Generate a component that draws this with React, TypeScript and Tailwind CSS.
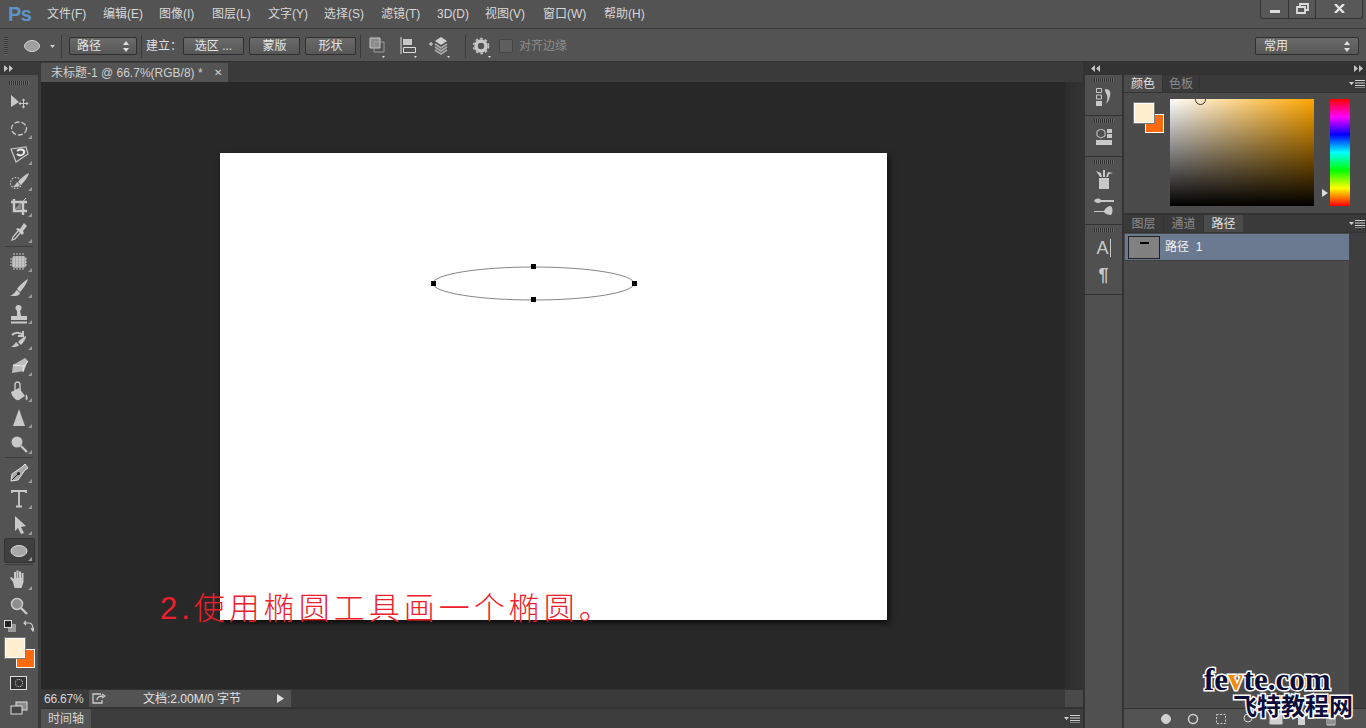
import React from "react";

const c = "#c9c9c9";

// little flyout corner on the tool buttons
const Corner = () => <path d="M32 19v4h-4z" fill="#9a9a9a" />;

const toolIcons: Record<string, React.ReactNode> = {
  move: (
    <>
      <path d="M11 5l8 7-8 5z" fill={c} />
      <path d="M23.500 10v7M20 13.500h7" stroke={c} strokeWidth="1" />
      <path d="M23.500 8.500l-2 2h4zM23.500 18.500l-2-2h4zM18.500 13.500l2-2v4zM28.500 13.500l-2-2v4z" fill={c} />
    </>
  ),
  marquee: (
    <>
      <ellipse cx="19" cy="12.500" rx="7.500" ry="6.500" fill="none" stroke={c} strokeWidth="1.300" strokeDasharray="5 2" />
      <Corner />
    </>
  ),
  lasso: (
    <>
      <path d="M11 7l15-2 2 7-12 8z" fill="none" stroke={c} strokeWidth="1.200" />
      <path d="M17 9c4-3 8-1 7 2s-5 3-7 1" fill="none" stroke="#eee" strokeWidth="2" />
      <Corner />
    </>
  ),
  quick: (
    <>
      <circle cx="16" cy="15" r="5.500" fill="none" stroke={c} strokeWidth="1.200" strokeDasharray="1.500 1.500" />
      <path d="M29 5c-3 1-8 5-11 9l3 3c3-3 7-8 8-12zM13 19c3 0 6 0 7-2l-3-3c-1 2-2 3-4 5z" fill={c} />
      <Corner />
    </>
  ),
  crop: (
    <>
      <path d="M11 8h16M14 5v3M14 8v9h13M23 8v13" stroke={c} strokeWidth="2.400" fill="none" />
      <path d="M26 4L13 18" stroke={c} strokeWidth="1" />
      <path d="M16 15l5-5v5z" fill="#888" />
      <Corner />
    </>
  ),
  dropper: (
    <>
      <path d="M24 3l3 3-4 5 1 2-2 2-6-6 2-1 2 1z" fill={c} />
      <path d="M18 11L13 17l-1 3 3-1 5-6" fill="none" stroke={c} strokeWidth="1.300" />
      <Corner />
    </>
  ),
  heal: (
    <>
      <rect x="12" y="7" width="14" height="12" rx="3" fill="#a8a8a8" />
      <path d="M14 4v18M17 4v18M20 4v18M23 4v18M10 10h18M10 13h18M10 16h18" stroke="#e0e0e0" strokeWidth="1" strokeDasharray="2 1" opacity=".8" />
      <Corner />
    </>
  ),
  brush: (
    <>
      <path d="M28 4C24 6 19 11 17 14l3 3c3-3 7-9 8-13z" fill={c} />
      <path d="M10 21c3 0 9 1 10-3l-3-3c-2 1-2 4-7 6z" fill={c} />
      <Corner />
    </>
  ),
  stamp: (
    <>
      <circle cx="18.500" cy="7" r="3" fill={c} />
      <path d="M17 9h3l1 6h6v4H11v-4h6zM11 20.500h16v2H11z" fill={c} />
      <Corner />
    </>
  ),
  history: (
    <>
      <path d="M12 8c3-3 8-3 11 0M23 4v5h-5" fill="none" stroke={c} strokeWidth="2" />
      <path d="M26 9c-3 1-6 4-8 6l3 3c2-2 5-6 5-9zM11 20c3 0 7 0 8-2l-3-3c-1 2-2 3-5 5z" fill={c} />
      <Corner />
    </>
  ),
  eraser: (
    <>
      <path d="M13 12l12-7 3 3-4 10-12 2z" fill="#bdbdbd" />
      <path d="M13 12l11 1 4-5M24 13l-1 6" fill="none" stroke="#ececec" strokeWidth="1" />
      <Corner />
    </>
  ),
  bucket: (
    <>
      <path d="M11 13l8-4 6 8-6 4c-3 1-7-3-8-8z" fill={c} />
      <path d="M15 12V6c0-4 5-4 5 0v6" fill="none" stroke={c} strokeWidth="1.400" />
      <path d="M26 15c2 2 2 5 1 6s-2-1-1-6z" fill={c} />
      <Corner />
    </>
  ),
  sharpen: (
    <>
      <path d="M19 4l6 17H13z" fill={c} />
      <Corner />
    </>
  ),
  dodge: (
    <>
      <circle cx="17" cy="11" r="5.500" fill={c} />
      <path d="M21 15l6 6" stroke={c} strokeWidth="2.200" />
      <Corner />
    </>
  ),
  pen: (
    <>
      <path d="M25 4l3 4-3 2-7 10-7 1 1-7 10-7z" fill="#a8a8a8" stroke="#e5e5e5" strokeWidth="1" />
      <path d="M12 20l6-6" stroke="#222" strokeWidth="1" />
      <circle cx="18.500" cy="13.500" r="1.500" fill="#222" />
      <Corner />
    </>
  ),
  text: (
    <>
      <path d="M12 7V5h14v2M19 5v15M16 20.500h6" fill="none" stroke={c} strokeWidth="1.800" />
      <Corner />
    </>
  ),
  path: (
    <>
      <path d="M15 4l11 10-5 1 3 6-3 1-3-6-3 3z" fill={c} />
      <Corner />
    </>
  ),
  ellipse: (
    <>
      <ellipse cx="19" cy="13" rx="8" ry="5.500" fill="#a8a8a8" stroke="#d8d8d8" strokeWidth="1" />
      <Corner />
    </>
  ),
  hand: (
    <>
      <path d="M13 15l-3-4 1-1 3 2V5h2v6h.500V3.500h2V11h.500V4.500h2V11h.500V6h2v9l-2 6h-7z" fill={c} />
      <Corner />
    </>
  ),
  zoom: (
    <>
      <circle cx="17" cy="11" r="5.500" fill="#8e8e8e" stroke={c} strokeWidth="1.500" />
      <path d="M21 15l6 6" stroke={c} strokeWidth="2.400" />
    </>
  ),
};

const toolGroups = [
  ["move", "marquee", "lasso", "quick", "crop", "dropper"],
  ["heal", "brush", "stamp", "history", "eraser", "bucket", "sharpen", "dodge"],
  ["pen", "text", "path", "ellipse"],
  ["hand", "zoom"],
];

const menus = [
  ["文件(F)", "w-[56px]"],
  ["编辑(E)", "w-[56px]"],
  ["图像(I)", "w-[53px]"],
  ["图层(L)", "w-[56px]"],
  ["文字(Y)", "w-[56px]"],
  ["选择(S)", "w-[57px]"],
  ["滤镜(T)", "w-[56px]"],
  ["3D(D)", "w-[48px]"],
  ["视图(V)", "w-[58px]"],
  ["窗口(W)", "w-[61px]"],
  ["帮助(H)", "w-[56px]"],
];

const Grip = () => (
  <div className="h-[4px] w-[20px] bg-[repeating-linear-gradient(to_right,#2e2e2e_0,#2e2e2e_1px,#6a6a6a_1px,#6a6a6a_2px)]" />
);

const Btn = ({ label, w }: { label: string; w: string }) => (
  <div className={`${w} flex h-[18px] items-center justify-center rounded-[2px] border border-[#2f2f2f] bg-[linear-gradient(#6a6a6a,#575757)] text-xs text-[#e4e4e4]`}>
    {label}
  </div>
);

const Sep = () => <div className="mx-[4px] h-[23px] w-px bg-[#3a3a3a]" />;

const Collapse = ({ dir }: { dir: "l" | "r" }) => (
  <svg width="9" height="7" viewBox="0 0 9 7" fill="#c4c4c4">
    {dir === "r" ? <path d="M0 0l4 3.500L0 7zM5 0l4 3.500L5 7z" /> : <path d="M4 0L0 3.500 4 7zM9 0L5 3.500 9 7z" />}
  </svg>
);

const PanelMenu = () => (
  <svg width="16" height="8" viewBox="0 0 16 8" fill="#d0d0d0">
    <path d="M0 2h5L2.500 5zM6 0h10v1H6zM6 2.500h10v1H6zM6 5h10v1H6zM6 7.500h10v1H6z" />
  </svg>
);

const Swatches = () => (
  <div className="relative h-[30px] w-[32px]">
    <div className="absolute left-[11px] top-[11px] h-[19px] w-[19px] border border-white bg-[#ff6a0d]" />
    <div className="absolute left-0 top-0 h-[20px] w-[20px] border border-white bg-[#ffefd0] outline outline-[#7a7a7a]" />
  </div>
);

const DockGroup = ({ h, children }: { h: string; children: React.ReactNode }) => (
  <div className={`${h} flex flex-col items-center gap-[6px] border-b border-[#333] bg-[#505050] pt-[3px]`}>
    <Grip />
    {children}
  </div>
);

export default function App() {
  return (
    <div className="flex h-[728px] w-[1366px] flex-col overflow-hidden bg-[#535353] font-['Liberation_Sans','Noto_Sans_CJK_SC',sans-serif] text-xs text-[#d6d6d6]">
      {/* menu bar */}
      <div className="flex h-[29px] shrink-0 items-center border-b border-[#3a3a3a]">
        <div className="w-[47px] pl-[8px] text-[20px] font-bold leading-none tracking-[-0.5px] text-[#5f93c9]">Ps</div>
        {menus.map(([label, w]) => (
          <div key={label} className={`${w} whitespace-nowrap text-[#d8d8d8]`}>
            {label}
          </div>
        ))}
        <div className="ml-auto mr-[3px] flex h-[19px] -translate-y-[5px] rounded-b-[3px] border border-t-0 border-[#333] bg-[#585858]">
          <div className="flex w-[28px] items-center justify-center border-r border-[#333]">
            <div className="mt-[5px] h-[3px] w-[10px] bg-[#ddd]" />
          </div>
          <div className="flex w-[27px] items-center justify-center border-r border-[#333]">
            <svg width="13" height="11" viewBox="0 0 13 11" fill="none" stroke="#ddd" strokeWidth="1.800">
              <path d="M4 3V1h8v6H9M1 4h8v6H1z" />
            </svg>
          </div>
          <div className="flex w-[46px] items-center justify-center">
            <svg width="11" height="9" viewBox="0 0 11 9" stroke="#e4e4e4" strokeWidth="2.400">
              <path d="M1 0l9 9M10 0L1 9" />
            </svg>
          </div>
        </div>
      </div>

      {/* options bar */}
      <div className="flex h-[33px] shrink-0 items-center border-b border-[#333] pt-[2px]">
        <div className="ml-[4px] mr-[15px] h-[18px] w-[4px] bg-[repeating-linear-gradient(to_bottom,#333_0,#333_1px,#666_1px,#666_2px)]" />
        <svg width="34" height="14" viewBox="0 0 34 14">
          <ellipse cx="9" cy="7" rx="7.500" ry="5.500" fill="#a0a0a0" stroke="#d0d0d0" />
          <path d="M27 6h5l-2.500 3z" fill="#d0d0d0" />
        </svg>
        <Sep />
        <div className="ml-[3px] flex h-[18px] w-[68px] items-center justify-between rounded-[2px] border border-[#2f2f2f] bg-[linear-gradient(#6a6a6a,#575757)] px-[7px] text-[#e4e4e4]">
          路径
          <svg width="6" height="11" viewBox="0 0 6 11" fill="#e0e0e0">
            <path d="M3 0l3 4H0zM3 11L0 7h6z" />
          </svg>
        </div>
        <Sep />
        <div className="mr-[1px] w-[36px] whitespace-nowrap text-[#e0e0e0]">建立：</div>
        <div className="flex gap-[5px]">
          <Btn label="选区 ..." w="w-[61px]" />
          <Btn label="蒙版" w="w-[51px]" />
          <Btn label="形状" w="w-[51px]" />
        </div>
        <Sep />
        <svg width="94" height="26" viewBox="0 0 94 26" fill="none" className="ml-[2px]">
          <path d="M3 5h10v10H3z" fill="#8a8a8a" stroke="#c8c8c8" />
          <path d="M7 9h10v10H7z" stroke="#9e9e9e" />
          <path d="M15 23h3l-1.500 2z" fill="#ddd" />
          <path d="M34 4v17" stroke="#ddd" />
          <path d="M36 6h9v6h-9z" fill="#c8c8c8" />
          <path d="M36.500 14.500h12v5h-12z" stroke="#ddd" />
          <path d="M47 23h3l-1.500 2z" fill="#ddd" />
          <path d="M62 11h4M64 9v4" stroke="#ddd" />
          <path d="M68 8l6-4 6 4-6 4z" fill="#d0d0d0" />
          <path d="M68 11l6 4 6-4M68 14l6 4 6-4M68 17l6 4 6-4" stroke="#aaa" strokeWidth="1.600" />
          <path d="M80 23h3l-1.500 2z" fill="#ddd" />
        </svg>
        <Sep />
        <svg width="24" height="26" viewBox="0 0 24 26" className="ml-[2px]">
          <circle cx="9" cy="13" r="5" fill="none" stroke="#c8c8c8" strokeWidth="3.500" />
          <circle cx="9" cy="13" r="7.500" fill="none" stroke="#c8c8c8" strokeWidth="1.500" strokeDasharray="2.500 2.400" />
          <path d="M16 23h3l-1.500 2z" fill="#ddd" />
        </svg>
        <div className="ml-[3px] h-[14px] w-[14px] rounded-[2px] border border-[#444] bg-[#5e5e5e]" />
        <div className="ml-[6px] whitespace-nowrap text-[#8c8c8c]">对齐边缘</div>
        <div className="ml-auto mr-[7px] flex h-[18px] w-[104px] items-center justify-between rounded-[2px] border border-[#2f2f2f] bg-[linear-gradient(#6a6a6a,#575757)] px-[8px] text-[#e4e4e4]">
          常用
          <svg width="6" height="11" viewBox="0 0 6 11" fill="#e0e0e0">
            <path d="M3 0l3 4H0zM3 11L0 7h6z" />
          </svg>
        </div>
      </div>

      <div className="flex min-h-0 flex-1">
        {/* toolbar */}
        <div className="flex w-[41px] shrink-0 flex-col border-r-[3px] border-[#3a3a3a]">
          <div className="flex h-[13px] items-center bg-[#3a3a3a] pl-[4px]">
            <Collapse dir="r" />
          </div>
          <div className="flex h-[15px] items-center justify-center pb-[2px] pt-[2px]">
            <Grip />
          </div>
          {toolGroups.map((group, i) => (
            <div key={i}>
              {i > 0 && <div className="mx-[5px] mb-[2px] h-px bg-[#3c3c3c]" />}
              {group.map((name) => (
                <div
                  key={name}
                  className={
                    name === "ellipse"
                      ? "mb-px ml-[4px] h-[25px] w-[31px] rounded-[2px] border border-[#333] bg-[#3f3f3f]"
                      : "h-[26px] w-[38px]"
                  }
                >
                  <svg width="38" height="26" viewBox="0 0 38 26" className={name === "ellipse" ? "-ml-[5px] -mt-px" : ""}>
                    {toolIcons[name]}
                  </svg>
                </div>
              ))}
            </div>
          ))}
          <div className="flex h-[14px] items-center justify-between px-[4px]">
            <svg width="14" height="12" viewBox="0 0 14 12">
              <rect x="4" y="4" width="8" height="8" fill="#9a9a9a" />
              <rect x="0.500" y="0.500" width="7" height="7" fill="#222" stroke="#ddd" />
            </svg>
            <svg width="11" height="12" viewBox="0 0 11 12" fill="none" stroke="#d0d0d0" strokeWidth="1.200">
              <path d="M1 3h5c3 0 4 2 4 7M3 1L1 3l2 2M8 8l2 3 1-3" />
            </svg>
          </div>
          <div className="ml-[5px] mt-[5px]">
            <Swatches />
          </div>
          <div className="ml-[10px] mt-[8px] flex h-[14px] w-[17px] items-center justify-center border border-[#ddd] bg-[#333]">
            <div className="h-[8px] w-[8px] rounded-full border border-dotted border-[#ddd]" />
          </div>
          <div className="ml-[10px] mt-[11px]">
            <svg width="22" height="16" viewBox="0 0 22 16" fill="none">
              <rect x="6" y="1" width="11" height="8" fill="#8a8a8a" stroke="#ddd" />
              <rect x="1" y="5" width="11" height="8" fill="#444" stroke="#ddd" />
            </svg>
          </div>
        </div>

        {/* document column */}
        <div className="flex min-w-0 flex-1 flex-col">
          <div className="flex h-[20px] shrink-0 items-end bg-[#3a3a3a]">
            <div className="flex h-[19px] w-[187px] items-center justify-between bg-[#535353] pl-[10px] pr-[6px] text-[#d0d0d0]">
              <span className="whitespace-nowrap">未标题-1 @ 66.7%(RGB/8) *</span>
              <span className="text-[10px] leading-none">✕</span>
            </div>
          </div>

          <div className="relative flex min-h-0 flex-1 bg-[#282828]">
            <div className="flex-1 pl-[179px] pt-[71px]">
              <div className="relative h-[467px] w-[667px] bg-white shadow-[2px_3px_6px_rgba(0,0,0,0.7)]">
                <svg width="667" height="467" viewBox="0 0 667 467" className="block">
                  <ellipse cx="313.500" cy="130.500" rx="100.500" ry="16.500" fill="none" stroke="#777" strokeWidth="0.900" />
                  <path d="M211 128h5v5h-5zM311 111h5v5h-5zM412 128h5v5h-5zM311 144h5v5h-5z" fill="#000" />
                </svg>
              </div>
            </div>
            <div className="w-[18px] shrink-0 bg-[linear-gradient(to_right,#2c2c2c,#343434)]" />
            {/* handwritten caption, it hangs over the edge of the canvas */}
            <div className="absolute left-[119px] top-[505px] whitespace-nowrap text-[31px] font-light leading-[44px] tracking-[4px] text-[#ee202c]">
              2.使用椭圆工具画一个椭圆。
            </div>
          </div>

          <div className="flex h-[19px] shrink-0 items-center border-y border-[#333] bg-[#3a3a3a]">
            <div className="w-[48px] pl-[3px] text-[12px] tracking-[-0.2px] text-[#d6d6d6]">66.67%</div>
            <div className="flex h-full w-[202px] items-center bg-[#535353] pl-[3px]">
              <svg width="14" height="11" viewBox="0 0 14 11" fill="none" stroke="#ccc" strokeWidth="1.300">
                <path d="M9 1H1v9h9V7M5 7c0-3 3-4 6-4M10 1l3 2-3 2" />
              </svg>
              <span className="ml-[37px] flex-1 whitespace-nowrap text-[#e0e0e0]">文档:2.00M/0 字节</span>
              <svg width="7" height="9" viewBox="0 0 7 9" fill="#e0e0e0" className="mr-[7px]">
                <path d="M0 0l7 4.500L0 9z" />
              </svg>
            </div>
            <div className="ml-auto h-full w-[18px] bg-[#4a4a4a]" />
          </div>

          <div className="flex h-[20px] shrink-0 items-center justify-between border-t border-[#333] bg-[#3d3d3d]">
            <div className="flex h-full w-[50px] items-center justify-center bg-[#535353] text-[#d6d6d6]">时间轴</div>
            <div className="mr-[3px]">
              <PanelMenu />
            </div>
          </div>
        </div>

        {/* dock icon column */}
        <div className="flex w-[41px] shrink-0 flex-col border-x-2 border-[#333] bg-[#505050]">
          <div className="h-[13px] shrink-0 bg-[#333]" />
          <DockGroup h="h-[41px]">
            <svg width="16" height="18" viewBox="0 0 16 18" fill="#c8c8c8">
              <path d="M0.500 0.500h5v4h-5zM0.500 7h5v4h-5z" fill="none" stroke="#c8c8c8" />
              <path d="M0 13h6v5H0z" />
              <path d="M9 1c5 0 6 3 5 7s-2 6-4 8c1-3 2-6 1-9-1-2-2-3-2-6z" />
            </svg>
          </DockGroup>
          <DockGroup h="h-[41px]">
            <svg width="16" height="18" viewBox="0 0 16 18" fill="#c8c8c8">
              <path d="M5 0l4 2v5l-4 2-4-2V2z" fill="none" stroke="#c8c8c8" />
              <path d="M11 0h5v4h-5zM11 5h5v4h-5zM0 11h16v5H0z" />
            </svg>
          </DockGroup>
          <DockGroup h="h-[68px]">
            <svg width="18" height="19" viewBox="0 0 18 19" fill="#c8c8c8">
              <path d="M4 8h10v11H4zM5 7L1 1l5 2 1 4zM8 7V0l2 0 0 7zM11 7l2-5 5 1-4 1-1 3z" />
            </svg>
            <svg width="20" height="18" viewBox="0 0 20 18" fill="#c8c8c8" className="mt-[2px]">
              <path d="M0 4c2-3 5-3 7-1 3 0 8 0 13 0v2H7C5 7 2 6 0 4zM0 14h10c1-3 4-5 7-5 2 2 2 7 0 9-3 0-6-1-7-3H0z" />
            </svg>
          </DockGroup>
          <DockGroup h="h-[70px]">
            <div className="mt-[1px] flex items-end font-['Liberation_Sans',sans-serif] text-[18px] leading-none text-[#c8c8c8]">
              A<span className="ml-[1px] h-[18px] w-px bg-[#c8c8c8]" />
            </div>
            <div className="mt-[3px] font-['Liberation_Sans',sans-serif] text-[18px] font-bold leading-none text-[#c8c8c8]">¶</div>
          </DockGroup>
          <div className="flex-1" />
        </div>

        {/* panels */}
        <div className="relative flex w-[242px] shrink-0 flex-col bg-[#4b4b4b]">
          <div className="flex h-[13px] shrink-0 items-center justify-between bg-[#333] px-[3px]">
            <div className="-ml-[36px]">
              <Collapse dir="l" />
            </div>
            <Collapse dir="r" />
          </div>

          <div className="flex h-[17px] shrink-0 items-stretch bg-[#3a3a3a]">
            <div className="flex w-[38px] items-center justify-center bg-[#4b4b4b] text-[#e0e0e0]">颜色</div>
            <div className="flex w-[38px] items-center justify-center border-x border-[#333] text-[#8c8c8c]">色板</div>
            <div className="ml-auto mr-[1px] self-center">
              <PanelMenu />
            </div>
          </div>
          <div className="flex h-[121px] shrink-0 border-t border-[#333] pl-[10px] pt-[6px]">
            <div className="mt-[4px]">
              <Swatches />
            </div>
            <div className="relative ml-[4px] h-[107px] w-[144px] overflow-hidden bg-[linear-gradient(to_bottom,transparent,#000),linear-gradient(to_right,#fff,#ffa600)]">
              <div className="absolute -top-[5px] left-[25px] h-[11px] w-[11px] rounded-full border border-[#333]" />
            </div>
            <div className="ml-[8px] mt-[90px] h-0 w-0 border-y-[4px] border-l-[6px] border-y-transparent border-l-[#ddd]" />
            <div className="ml-[2px] h-[107px] w-[20px] bg-[linear-gradient(to_bottom,#f00,#f0f,#00f,#0ff,#0f0,#ff0,#f00)]" />
          </div>

          <div className="flex h-[19px] shrink-0 items-stretch border-t-2 border-[#333] bg-[#3a3a3a]">
            <div className="flex w-[39px] items-center justify-center text-[#8c8c8c]">图层</div>
            <div className="flex w-[41px] items-center justify-center border-x border-[#333] text-[#8c8c8c]">通道</div>
            <div className="flex w-[39px] items-center justify-center bg-[#4b4b4b] text-[#e0e0e0]">路径</div>
            <div className="ml-auto mr-[1px] self-center">
              <PanelMenu />
            </div>
          </div>

          <div className="flex min-h-0 flex-1 border-t border-[#333]">
            <div className="flex flex-1 flex-col">
              <div className="mt-[1px] ml-px flex h-[27px] items-center border-b border-[#3c3c3c] bg-[#6b7a90] pl-[3px]">
                <div className="flex h-[23px] w-[32px] items-start justify-center border border-[#222] bg-[#808080] pt-[5px]">
                  <div className="h-[2px] w-[9px] bg-black" />
                </div>
                <span className="ml-[5px] whitespace-nowrap text-[#f2f2f2]">路径&nbsp;&nbsp;1</span>
              </div>
              <div className="flex-1" />
            </div>
            <div className="w-[17px] bg-[#3e3e3e]" />
          </div>

          <div className="flex h-[20px] shrink-0 items-center border-t border-[#333] bg-[#535353] pl-[37px]">
            <svg width="180" height="14" viewBox="0 0 180 14" fill="none" stroke="#d0d0d0">
              <circle cx="5" cy="7" r="4.500" fill="#d0d0d0" />
              <circle cx="32" cy="7" r="4.500" strokeWidth="1.500" />
              <rect x="55.500" y="2.500" width="9" height="9" strokeDasharray="2 1.500" />
              <circle cx="87" cy="6" r="4" />
              <rect x="109" y="1" width="12" height="11" fill="#d0d0d0" />
              <path d="M134 3h10v10h-7v-7h-3z" fill="#d0d0d0" stroke="none" />
              <path d="M165 3h10M166 5h8v8h-8zM168 5v8M170 5v8M172 5v8" />
            </svg>
          </div>

          {/* watermark stamped on top of the panel */}
          <div className="pointer-events-none absolute left-[80px] top-[605px] flex flex-col font-['Liberation_Serif','Noto_Sans_CJK_SC',serif] font-bold leading-none text-[#0d0d3a] [-webkit-text-stroke:3px_#fff] [paint-order:stroke_fill]">
            <div className="whitespace-nowrap text-[31px] leading-[26px] [paint-order:stroke_fill]">
              fe<span className="text-[#f58a0b]">v</span>te.com
            </div>
            <div className="ml-[29px] whitespace-nowrap font-['Noto_Sans_CJK_SC',sans-serif] text-[24px] leading-[24px] [paint-order:stroke_fill]">飞特教程网</div>
          </div>
        </div>
      </div>
    </div>
  );
}
